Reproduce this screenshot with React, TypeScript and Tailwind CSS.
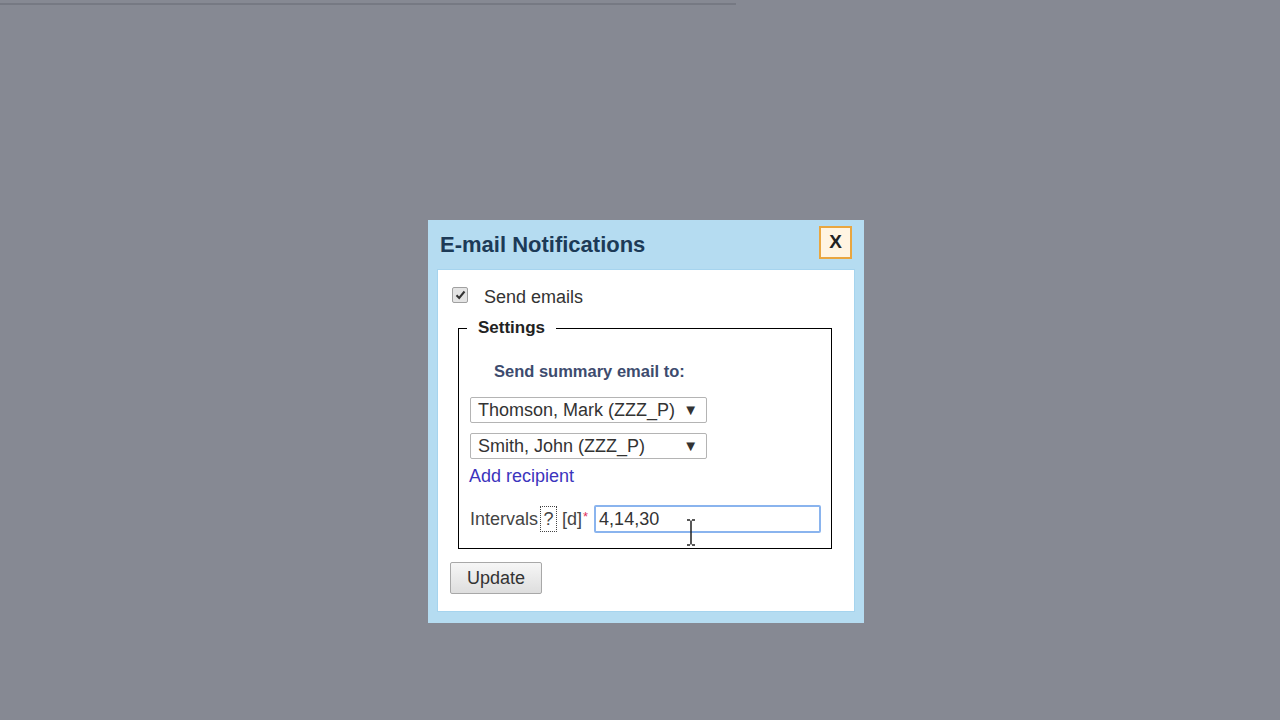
import React from "react";

export default function App() {
  const font = { fontFamily: '"Liberation Sans", Arial, sans-serif' };
  return (
    <div className="relative w-[1280px] h-[720px] bg-[#868993] overflow-hidden" style={font}>
      <div className="absolute left-0 top-[3px] w-[736px] h-[2px] bg-[#767983]" />
      <div className="absolute left-[428px] top-[220px] w-[436px] h-[403px] bg-[#b5dcf1] flex flex-col">
        <div className="h-[49px] flex items-start justify-between pl-[12px] pr-[12px]">
          <div className="mt-[13px] text-[22px] font-bold text-[#1c3a57] leading-[24px]">E-mail Notifications</div>
          <div className="mt-[6px] w-[33px] h-[33px] bg-[#fff4e2] border-2 border-[#e9a640] flex items-center justify-center text-[19px] font-bold text-[#222]">
            X
          </div>
        </div>
        <div className="mx-[9px] h-[343px] bg-white border border-[#a6d4ee] flex flex-col">
          <div className="flex items-center mt-[16px] ml-[14px] h-[18px]">
            <div className="w-[16px] h-[16px] rounded-[2px] border border-[#a0a0a0] bg-[#e4e4e4] flex items-center justify-center">
              <svg width="11" height="10" viewBox="0 0 11 10">
                <path d="M1.5 5.2 L4.2 8 L9.5 1.5" fill="none" stroke="#333" strokeWidth="2" />
              </svg>
            </div>
            <span className="ml-[16px] text-[18px] text-[#333] leading-[20px] mt-[4px]">Send emails</span>
          </div>
          <fieldset className="ml-[20px] mr-[22px] mt-[14px] h-[231px] border border-black pl-[11px] pr-0 pb-0 pt-0">
            <legend className="-ml-[3px] px-[11px] text-[17px] font-bold text-[#222] leading-[20px]">Settings</legend>
            <div className="ml-[24px] mt-[23px] text-[16.5px] font-bold text-[#3d4b6e] leading-[20px]">Send summary email to:</div>
            <div className="mt-[16px] w-[237px] h-[26px] border border-[#b4b4b4] rounded-[2px] flex items-center justify-between pl-[7px] pr-[8px] text-[18px] text-[#333]">
              <span>Thomson, Mark (ZZZ_P)</span>
              <span className="text-[15px]">▼</span>
            </div>
            <div className="mt-[10px] w-[237px] h-[26px] border border-[#b4b4b4] rounded-[2px] flex items-center justify-between pl-[7px] pr-[8px] text-[18px] text-[#333]">
              <span>Smith, John (ZZZ_P)</span>
              <span className="text-[15px]">▼</span>
            </div>
            <div className="mt-[7px] -ml-[1px] text-[18px] text-[#3c34bd] leading-[20px]">Add recipient</div>
            <div className="mt-[19px] flex items-center h-[28px]">
              <span className="text-[18px] text-[#444]">Intervals</span>
              <span className="ml-[2px] border border-dotted border-[#444] text-[18px] text-[#444] w-[17px] h-[26px] flex items-center justify-center">?</span>
              <span className="ml-[5px] text-[18px] text-[#444]">[d]</span>
              <span className="ml-[1px] text-[13px] text-[#e0305a] self-start mt-[2px]">*</span>
              <div className="ml-[6px] w-[227px] h-[28px] border-2 border-[#8ab4ee] rounded-[2px] flex items-center pl-[3px] text-[18px] text-[#333] relative">
                4,14,30
                <svg className="absolute left-[90px] top-[12px]" width="10" height="27" viewBox="0 0 10 27">
                  <path d="M1 1 H4 M6 1 H9 M5 1.5 V25.5 M1 26 H4 M6 26 H9" stroke="#222" strokeWidth="1.5" fill="none" />
                </svg>
              </div>
            </div>
          </fieldset>
          <div className="ml-[12px] mt-[13px] w-[92px] h-[32px] border border-[#a8a8a8] rounded-[2px] bg-gradient-to-b from-[#f6f6f6] to-[#dedede] flex items-center justify-center text-[18px] text-[#333]">
            Update
          </div>
        </div>
      </div>
    </div>
  );
}
